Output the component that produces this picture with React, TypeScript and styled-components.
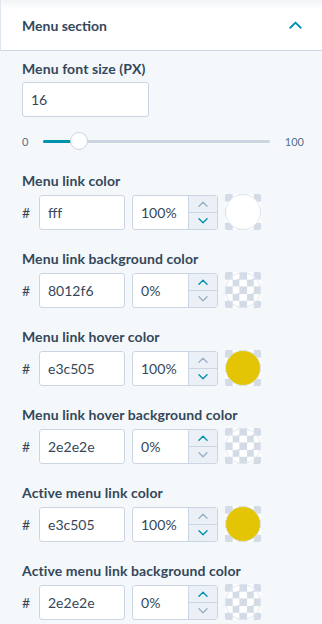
import styled, { createGlobalStyle } from 'styled-components';

const GlobalStyle = createGlobalStyle`
  html, body {
    margin: 0;
    padding: 0;
    background: #f5f8fa;
  }
  body {
    font-family: Lato, "Liberation Sans", sans-serif;
    color: #33475b;
  }
`;

type ColorField = {
  label: string;
  hex: string;
  alpha: number;
};

const fields: ColorField[] = [
  { label: 'Menu link color', hex: 'fff', alpha: 100 },
  { label: 'Menu link background color', hex: '8012f6', alpha: 0 },
  { label: 'Menu link hover color', hex: 'e3c505', alpha: 100 },
  { label: 'Menu link hover background color', hex: '2e2e2e', alpha: 0 },
  { label: 'Active menu link color', hex: 'e3c505', alpha: 100 },
  { label: 'Active menu link background color', hex: '2e2e2e', alpha: 0 },
];

const Chevron = ({ up, color, size = 10 }: { up?: boolean; color: string; size?: number }) => (
  <svg width={size} height={size * 0.6} viewBox="0 0 10 6" fill="none">
    <path
      d={up ? 'M1 5.2 L5 1.2 L9 5.2' : 'M1 0.8 L5 4.8 L9 0.8'}
      stroke={color}
      strokeWidth="1.4"
      strokeLinecap="round"
      strokeLinejoin="round"
    />
  </svg>
);

export default function App() {
  const fontSize = 16;

  return (
    <Panel>
      <GlobalStyle />
      <Header>
        <HeaderTitle>Menu section</HeaderTitle>
        <Chevron up color="#0091ae" size={13} />
      </Header>
      <Body>
        <Group>
          <Label>Menu font size (PX)</Label>
          <SizeInput>{fontSize}</SizeInput>
          <SliderRow>
            <SliderEnd>0</SliderEnd>
            <Track>
              <TrackFill style={{ width: `${fontSize}%` }} />
              <Thumb style={{ left: `${fontSize}%` }} />
            </Track>
            <SliderEnd>100</SliderEnd>
          </SliderRow>
        </Group>

        {fields.map((f) => (
          <Group key={f.label}>
            <Label>{f.label}</Label>
            <ColorRow>
              <Hash>#</Hash>
              <HexInput>{f.hex}</HexInput>
              <AlphaBox>
                <AlphaValue>{f.alpha}%</AlphaValue>
                <Stepper>
                  <StepButton>
                    <Chevron up color={f.alpha >= 100 ? '#99afc4' : '#0091ae'} />
                  </StepButton>
                  <StepButton $bottom>
                    <Chevron color={f.alpha <= 0 ? '#99afc4' : '#0091ae'} />
                  </StepButton>
                </Stepper>
              </AlphaBox>
              <Swatch>
                <SwatchDot
                  style={{ background: f.alpha > 0 ? `#${f.hex}` : 'transparent' }}
                />
              </Swatch>
            </ColorRow>
          </Group>
        ))}
      </Body>
    </Panel>
  );
}

const Panel = styled.div`
  width: 322px;
  min-height: 624px;
  background: #f5f8fa;
`;

const Header = styled.div`
  height: 50px;
  display: flex;
  align-items: center;
  justify-content: space-between;
  padding: 0 20px 0 21px;
  background: linear-gradient(#f1f4f7, #fff 10px);
  border-left: 1px solid #dfe6ee;
  border-bottom: 1px solid #cbd6e2;
`;

const HeaderTitle = styled.span`
  font-size: 14px;
  font-weight: 700;
  color: #33475b;
`;

const Body = styled.div`
  padding: 10px 18px 0 22px;
  display: flex;
  flex-direction: column;
`;

const Group = styled.div`
  display: flex;
  flex-direction: column;
  margin-bottom: 21px;
`;

const Label = styled.div`
  font-size: 14px;
  line-height: 16px;
  font-weight: 700;
  letter-spacing: 0.1px;
  color: #33475b;
  margin-bottom: 5px;
`;

const Field = styled.div`
  box-sizing: border-box;
  height: 35px;
  display: flex;
  align-items: center;
  background: #fff;
  border: 1px solid #cbd6e2;
  border-radius: 3px;
  font-size: 14px;
  color: #33475b;
`;

const SizeInput = styled(Field)`
  width: 127px;
  padding: 0 8px;
`;

const SliderRow = styled.div`
  display: flex;
  align-items: center;
  height: 20px;
  margin-top: 14px;
  margin-bottom: 1px;
`;

const SliderEnd = styled.span`
  font-size: 11px;
  color: #516f90;
  width: 21px;
  &:last-child {
    width: auto;
    margin-left: 15px;
  }
`;

const Track = styled.div`
  position: relative;
  width: 229px;
  height: 3px;
  border-radius: 2px;
  background: #cbd6e2;
`;

const TrackFill = styled.div`
  height: 100%;
  border-radius: 2px;
  background: #0091ae;
`;

const Thumb = styled.div`
  position: absolute;
  top: 50%;
  width: 18px;
  height: 18px;
  box-sizing: border-box;
  margin: -9px 0 0 -9px;
  border-radius: 50%;
  background: #fff;
  border: 1px solid #cbd6e2;
`;

const ColorRow = styled.div`
  display: flex;
  align-items: center;
  height: 36px;
`;

const Hash = styled.span`
  width: 17px;
  font-size: 14px;
  color: #33475b;
`;

const HexInput = styled(Field)`
  width: 86px;
  padding: 0 8px;
  margin-right: 7px;
`;

const AlphaBox = styled(Field)`
  width: 86px;
  overflow: hidden;
  margin-right: 7px;
`;

const AlphaValue = styled.span`
  flex: 1;
  padding-left: 8px;
`;

const Stepper = styled.div`
  width: 28px;
  height: 100%;
  display: flex;
  flex-direction: column;
  border-left: 1px solid #cbd6e2;
  background: #eaf0f6;
`;

const StepButton = styled.div<{ $bottom?: boolean }>`
  flex: 1;
  display: flex;
  align-items: center;
  justify-content: center;
  border-top: ${(p) => (p.$bottom ? '1px solid #cbd6e2' : 'none')};
`;

const Swatch = styled.div`
  position: relative;
  width: 36px;
  height: 36px;
  border-radius: 2px;
  background: conic-gradient(#fff 0 25%, #d3dce6 0 50%, #fff 0 75%, #d3dce6 0) 0 0 / 14.4px 14.4px;
`;

const SwatchDot = styled.div`
  position: absolute;
  inset: 0;
  box-sizing: border-box;
  border-radius: 50%;
  border: 1px solid #dfe6ee;
`;
